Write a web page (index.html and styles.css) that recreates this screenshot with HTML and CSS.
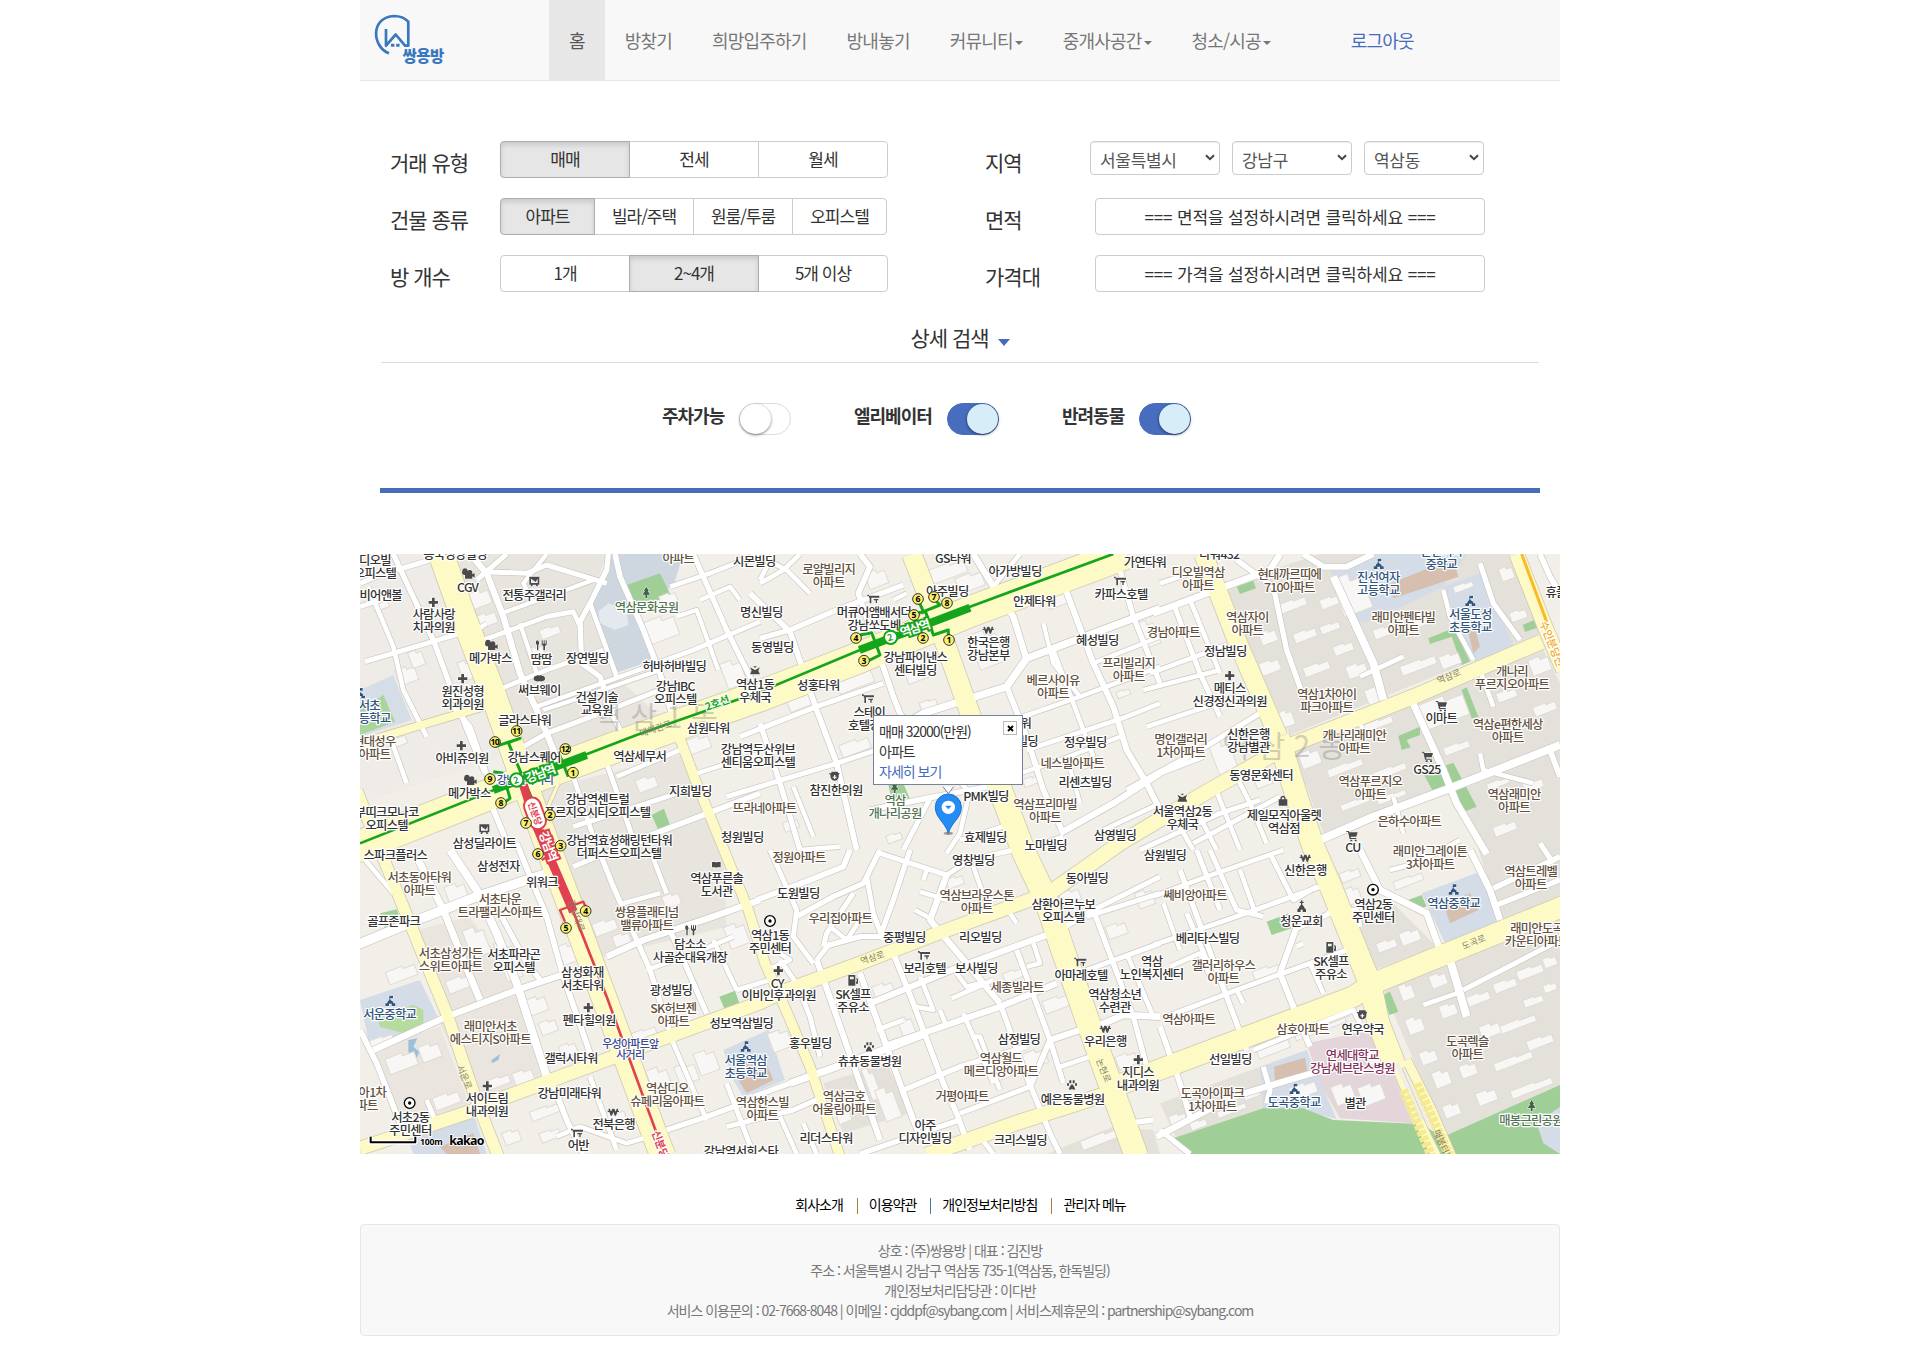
FILE: index.html
```html
<!DOCTYPE html>
<html lang="ko">
<head>
<meta charset="utf-8">
<title>쌍용방</title>
<link rel="stylesheet" href="styles.css">
</head>
<body>
<div class="container">
  <header class="navbar">
    <a class="brand">
      <svg class="logo" viewBox="0 0 72 60" width="72" height="60">
        <path d="M15 44.3C-2 38-4 8 20 7Q29 7 34.3 12.7V36.7H31L21.7 25.5L12 36.7V20" fill="none" stroke="#3878bf" stroke-width="2.7" stroke-linejoin="round"/>
        <path d="M17 36.2h3.4M22.2 36.2h3.4" stroke="#3878bf" stroke-width="3"/>
        <text class="logo-text" x="28.6" y="53.4">쌍용방</text>
      </svg>
    </a>
    <nav class="menu">
      <a class="menu-item active">홈</a>
      <a class="menu-item">방찾기</a>
      <a class="menu-item">희망입주하기</a>
      <a class="menu-item">방내놓기</a>
      <a class="menu-item">커뮤니티<i class="caret"></i></a>
      <a class="menu-item">중개사공간<i class="caret"></i></a>
      <a class="menu-item">청소/시공<i class="caret"></i></a>
    </nav>
    <a class="logout">로그아웃</a>
  </header>

  <section class="filters">
    <div class="col-left">
      <div class="row"><span class="row-label">거래 유형</span>
        <div class="btn-group thirds"><label class="btn on">매매</label><label class="btn">전세</label><label class="btn">월세</label></div></div>
      <div class="row"><span class="row-label">건물 종류</span>
        <div class="btn-group kinds"><label class="btn on">아파트</label><label class="btn">빌라/주택</label><label class="btn">원룸/투룸</label><label class="btn">오피스텔</label></div></div>
      <div class="row"><span class="row-label">방 개수</span>
        <div class="btn-group thirds"><label class="btn">1개</label><label class="btn on">2~4개</label><label class="btn">5개 이상</label></div></div>
    </div>
    <div class="col-right">
      <div class="row"><span class="row-label">지역</span>
        <div class="selects">
          <div class="select wide">서울특별시<svg viewBox="0 0 10 7"><path d="M1 1.2l4 4 4-4"/></svg></div>
          <div class="select">강남구<svg viewBox="0 0 10 7"><path d="M1 1.2l4 4 4-4"/></svg></div>
          <div class="select">역삼동<svg viewBox="0 0 10 7"><path d="M1 1.2l4 4 4-4"/></svg></div>
        </div></div>
      <div class="row"><span class="row-label">면적</span><button class="range">=== 면적을 설정하시려면 클릭하세요 ===</button></div>
      <div class="row"><span class="row-label">가격대</span><button class="range">=== 가격을 설정하시려면 클릭하세요 ===</button></div>
    </div>
  </section>

  <div class="detail-head">상세 검색<i class="tri"></i></div>
  <div class="toggles">
    <span class="toggle-name first">주차가능</span><span class="switch"></span>
    <span class="toggle-name second">엘리베이터</span><span class="switch checked"></span>
    <span class="toggle-name third">반려동물</span><span class="switch checked"></span>
  </div>

  <div class="map">
    <svg id="map" viewBox="0 12 3600 1800" width="1200" height="600"></svg>
    <div class="info">
      <div>매매 32000(만원)</div>
      <div>아파트</div>
      <a>자세히 보기</a>
      <span class="info-close"><svg viewBox="0 0 7 7" width="7" height="7"><path d="M1 1l5 5M6 1l-5 5"/></svg></span>
    </div>
  </div>

  <div class="foot-links"><a>회사소개</a><i></i><a>이용약관</a><i></i><a>개인정보처리방침</a><i></i><a>관리자 메뉴</a></div>
  <footer class="foot">
    <p>상호 : (주)쌍용방 | 대표 : 김진방</p>
    <p>주소 : 서울특별시 강남구 역삼동 735-1(역삼동, 한독빌딩)</p>
    <p>개인정보처리담당관 : 이다반</p>
    <p>서비스 이용문의 : 02-7668-8048 | 이메일 : cjddpf@sybang.com | 서비스제휴문의 : partnership@sybang.com</p>
  </footer>
</div>
<script src="map.js"></script>
</body>
</html>
```
FILE: styles.css
```css
* { box-sizing: border-box; }
body {
  margin: 0;
  background: #fff;
  color: #333;
  font: 14px/20px "Noto Sans CJK KR", sans-serif;
  letter-spacing: -1px;
}
.container { width: 1200px; margin: 0 auto; }

.navbar {
  display: flex;
  height: 81px;
  background: #f8f8f8;
  border-bottom: 1px solid #e7e7e7;
  font-size: 18px;
  line-height: 80px;
  letter-spacing: -0.8px;
}
.brand { width: 189px; padding: 9px 0 0 14px; line-height: 0; }
.logo-text { font-size: 15.5px; font-weight: 900; fill: #3878bf; letter-spacing: -0.5px; }
.menu { display: flex; }
.menu-item { padding: 0 20px; color: #777; white-space: nowrap; }
.menu-item.active { background: #e7e7e7; color: #555; }
.caret {
  display: inline-block;
  margin-left: 2px;
  vertical-align: middle;
  border: 4px solid transparent;
  border-top-color: #777;
  border-bottom: 0;
}
.logout { margin-left: 60px; color: #476cbd; }

.filters { display: flex; padding: 60px 0 0 30px; }
.col-left { width: 595px; }
.row { display: flex; height: 57px; }
.row-label { width: 110px; font-size: 21px; line-height: 42px; }
.btn-group { display: flex; height: 37px; }
.btn {
  margin-left: -1px;
  height: 37px;
  border: 1px solid #ccc;
  background: #fff;
  font-size: 17px;
  line-height: 34px;
  text-align: center;
}
.thirds .btn { width: 130px; }
.btn:first-child { margin-left: 0; border-radius: 4px 0 0 4px; }
.btn:last-child { border-radius: 0 4px 4px 0; }
.kinds .btn { width: 100px; }
.kinds .btn:first-child, .kinds .btn:last-child { width: 95px; }
.btn.on {
  z-index: 1;
  background: #e6e6e6;
  border-color: #adadad;
  box-shadow: inset 0 3px 5px rgba(0, 0, 0, .125);
}
.selects { display: flex; gap: 12px; margin-left: -5px; letter-spacing: -0.3px; }
.select {
  display: flex;
  justify-content: space-between;
  align-items: center;
  width: 120px;
  height: 34px;
  padding: 3px 4px 0 9px;
  border: 1px solid #ccc;
  border-radius: 4px;
  box-shadow: inset 0 1px 1px rgba(0, 0, 0, .075);
  color: #555;
  font-size: 17px;
}
.select.wide { width: 130px; }
.select svg { width: 10px; height: 7px; margin-top: -5px; fill: none; stroke: #444; stroke-width: 2; }
.range {
  width: 390px;
  height: 37px;
  padding: 0;
  border: 1px solid #ccc;
  border-radius: 4px;
  background: #fff;
  color: #333;
  font: 17px/34px "Noto Sans CJK KR", sans-serif;
  letter-spacing: -0.15px;
}

.detail-head {
  display: flex;
  justify-content: center;
  height: 51px;
  margin: 0 21px;
  border-bottom: 1px solid #ddd;
  font-size: 21px;
  line-height: 50px;
}
.tri {
  align-self: center;
  margin: 10px 0 0 9px;
  border: 6.5px solid transparent;
  border-top: 7px solid #466bbd;
  border-bottom: 0;
}
.toggles {
  display: flex;
  height: 130px;
  margin: 0 20px;
  padding-top: 40px;
  border-bottom: 5px solid #476cb8;
  font-size: 18px;
  font-weight: 700;
  line-height: 25px;
}
.toggle-name.first { width: 77px; margin-left: 282px; }
.toggle-name.second { width: 93px; margin-left: 63px; }
.toggle-name.third { width: 77px; margin-left: 63px; }
.switch {
  display: flex;
  width: 52px;
  height: 32px;
  border: 1px solid #ddd;
  border-radius: 16px;
}
.switch::before {
  content: "";
  width: 31px;
  height: 30px;
  border-radius: 50%;
  background: #fff;
  box-shadow: 0 1px 3px rgba(0, 0, 0, .5);
}
.switch.checked { justify-content: flex-end; background: #486cbe; border-color: #486cbe; }
.switch.checked::before { background: #d7eef9; }

.map { position: relative; width: 1200px; height: 600px; margin-top: 61px; overflow: hidden; }
.map > svg { display: block; background: #f2efe9; }
.info {
  position: absolute;
  left: 513px;
  top: 161px;
  width: 150px;
  height: 70px;
  padding: 5px;
  border: 1px solid #76819e;
  background: #fff;
  white-space: nowrap;
}
.info a { color: #476cbd; }
.info-close {
  position: absolute;
  top: 5px;
  right: 5px;
  display: grid;
  place-items: center;
  width: 14px;
  height: 14px;
  border: 1px solid #bbb;
  line-height: 0;
}
.info-close path { stroke: #000; stroke-width: 1.8; }

/* map features, drawn in thirds of a pixel */
.lbl { font-size: 37px; font-weight: 500; letter-spacing: -2.2px; text-anchor: middle; fill: #333; stroke: #fff; stroke-width: 7px; stroke-linejoin: round; paint-order: stroke; }
.apt { fill: #625140; }
.park { fill: #527355; }
.school { fill: #31557e; }
.hosp { fill: #81305a; }
.cross { fill: #3b4a91; font-size: 33px; }
.road-name { font-size: 27px; letter-spacing: 0; fill: #85806b; stroke: none; text-anchor: middle; }
.ghost { font-size: 88px; letter-spacing: 26px; fill: #777; opacity: .32; }
.line-name { font-size: 32px; font-weight: 700; fill: #14a51c; stroke: #fff; stroke-width: 6px; paint-order: stroke; text-anchor: middle; letter-spacing: -1px; }
.line-name.red { fill: #e0404f; }
.line-name.amber { fill: #f5a623; font-weight: 500; }
.line-name.small { font-size: 27px; stroke: none; }
.station { font-size: 37px; font-weight: 700; fill: #fff; stroke: #14a51c; stroke-width: 12px; paint-order: stroke; text-anchor: middle; letter-spacing: -4px; }
.station.red { stroke: #e0404f; }
.exit circle { fill: #f9f068; stroke: #333; stroke-width: 3; }
.exit text { font: 700 26px "Noto Sans", sans-serif; fill: #000; text-anchor: middle; letter-spacing: -2px; }
.scale-text { font: 700 26px "Noto Sans", sans-serif; letter-spacing: -0.5px; stroke: #fff; stroke-width: 5px; paint-order: stroke; }
.kakao { font: 700 37px "Noto Sans", sans-serif; letter-spacing: -2px; stroke: #fff; stroke-width: 5px; paint-order: stroke; }
.icon { fill: #4a4a4a; stroke: #fff; stroke-width: 3px; paint-order: stroke; }
.icon.school { fill: #31557e; }
.icon.park { fill: #42634a; }

.foot-links {
  display: flex;
  justify-content: center;
  align-items: center;
  height: 70px;
  padding: 30px 0 0 1px;
  color: #000;
}
.foot-links i { width: 1px; height: 16px; margin: 3px 11px 0 14px; background: #b07b35; }
.foot-links i:nth-of-type(2) { background: #3c80a3; }
.foot {
  height: 112px;
  padding: 15px 0;
  border: 1px solid #e7e7e7;
  border-radius: 4px;
  background: #f8f8f8;
  color: #777;
  text-align: center;
}
.foot p { margin: 0; }
```
FILE: map.js
```js
// The map is split in six sheets of 1200x900 units; a feature's points are local to its sheet.
const SHEETS = { A: [0, 0], B: [1200, 0], C: [2400, 0], D: [0, 900], E: [1200, 900], F: [2400, 900] };
const svg = document.getElementById('map');
let out = '';
const pts = (s, list) => list.trim().split(/\s+/).map(p => {
  const [x, y] = p.split(',').map(Number);
  return (x + SHEETS[s][0]) + ',' + (y + SHEETS[s][1]);
}).join(' ');

// ---- areas ----
const areas = [
  ['A', '#e8e5de', '285,12 740,12 690,160 770,380 900,500 480,640 400,420'],
  ['A', '#e8e5de', '540,720 980,610 1090,900 1100,1130 730,1220 620,950'],
  ['A', '#efece7', '0,12 200,12 430,620 0,760'],
  ['A', '#ced6df', '750,12 970,12 940,110 800,160 850,240 880,330 765,370 690,180'],
  ['A', '#e4e9ef', '715,185 745,160 800,180 805,225 765,240 720,220'],
  ['A', '#9fcf97', '792,108 900,70 932,135 812,185'],
  ['A', '#d5dde6', '0,420 100,375 155,510 0,560'],
  ['A', '#a9d49c', '0,480 70,435 105,515 0,555'],
  ['A', '#9fcf97', '875,795 912,776 930,825 895,840'],
  ['B', '#9fcf97', '385,705 430,700 455,760 400,770'],
  ['C', '#e4e1da', '180,110 480,12 1050,12 1140,250 390,555'],
  ['C', '#e4e1da', '400,600 1150,300 1200,400 1200,580 870,710 490,850'],
  ['C', '#e4e1da', '900,720 1200,600 1200,1060 1020,1110'],
  ['C', '#d3dce7', '510,60 620,12 920,12 850,110 640,210 580,220'],
  ['C', '#d7bfb0', '680,105 880,25 895,80 700,145'],
  ['C', '#d3dce7', '850,110 960,70 1060,285 945,335'],
  ['C', '#d7bfb0', '915,210 935,200 960,290 940,310'],
  ['C', '#9fcf97', '230,110 280,92 288,115 240,132'],
  ['C', '#9fcf97', '805,265 880,235 930,335 905,345 875,260 810,282'],
  ['C', '#9fcf97', '905,420 920,412 955,500 935,505'],
  ['C', '#9fcf97', '715,558 780,530 780,555 740,570 752,592 725,600'],
  ['C', '#9fcf97', '790,670 880,638 950,770 905,788 875,720 820,727'],
  ['C', '#9fcf97', '1088,225 1135,205 1140,230 1095,246'],
  ['D', '#d3dce7', '0,450 180,390 240,515 30,595'],
  ['D', '#b5db9e', '50,500 160,465 190,480 190,520 130,550 60,530'],
  ['D', '#9fcf97', '60,190 110,178 130,230 80,255'],
  ['D', '#eae6df', '170,240 330,200 470,400 420,440 260,490'],
  ['D', '#eae6df', '240,520 480,430 570,680 350,770'],
  ['D', '#eae6df', '30,600 240,530 330,770 110,830'],
  ['D', '#9fcf97', '1078,440 1125,422 1140,465 1095,480'],
  ['D', '#d3dce7', '1090,600 1225,540 1275,690 1150,740 1120,690'],
  ['D', '#d7bfb0', '1110,650 1210,620 1240,690 1160,730'],
  ['D', '#d3dce7', '140,855 340,790 380,912 160,912'],
  ['D', '#d7bfb0', '240,890 340,850 360,912 260,912'],
  ['D', '#9dbfdb', '145,570 172,565 160,590 178,605 165,640 145,605'],
  ['D', '#9dbfdb', '395,630 420,612 415,630 395,640'],
  ['E', '#e4e1da', '190,700 380,640 450,790 250,850'],
  ['E', '#e4e1da', '860,912 1060,830 1180,840 1200,912'],
  ['F', '#e4e1da', '590,200 700,160 830,290 640,360'],
  ['F', '#e4e1da', '670,420 1200,200 1200,730 860,860'],
  ['F', '#e4e1da', '0,760 300,650 400,800 50,870'],
  ['F', '#d3dce7', '785,130 960,65 1025,215 860,290'],
  ['F', '#d7bfb0', '850,160 930,130 955,180 870,220'],
  ['F', '#9fcf97', '730,155 785,135 800,170 770,175'],
  ['F', '#9fcf97', '320,215 385,190 395,235 335,255'],
  ['F', '#9fcf97', '668,435 690,425 715,485 688,495'],
  ['F', '#e3d5d9', '440,580 610,545 660,570 760,820 540,805 480,700'],
  ['F', '#d3dce7', '300,650 440,600 530,808 430,780 310,775'],
  ['F', '#d7bfb0', '342,650 435,623 445,680 345,705'],
  ['F', '#9fcf97', '40,865 310,775 430,775 520,810 780,822 850,860 1200,705 1200,912 85,912'],
  ['F', '#d3dce7', '1130,820 1200,770 1200,912 1150,880'],
];
areas.forEach(([s, c, p]) => out += `<polygon fill="${c}" points="${pts(s, p)}"/>`);

// ---- building blocks: x, y, width, height ----
const blocks = {
  A: '330,120,60,50 340,190,70,40 110,350,60,50 500,290,50,30 540,230,60,30 860,200,90,70 900,130,50,30 30,120,50,60 150,300,40,50 300,330,40,60 980,560,70,45 1090,330,60,80 440,640,40,30 690,720,60,50 830,680,60,40 240,80,30,60 80,560,60,30 560,660,50,40',
  B: '510,40,110,45 590,70,80,50 640,240,80,110 430,310,90,80 230,370,110,45 80,420,80,55 240,570,90,40 320,60,60,50 860,130,60,40 1140,210,50,80 1070,420,40,20 960,620,60,30 790,680,50,25 70,810,45,30 380,850,45,25 480,450,50,25',
  C: '350,150,90,30 480,140,60,30 400,240,70,30 430,340,80,30 560,340,60,40 720,330,110,30 640,230,60,30 750,190,60,40 840,310,60,40 620,410,60,60 600,510,100,25 780,440,140,80 1010,420,60,30 1110,320,60,50 1120,460,70,30 850,580,80,25 420,600,60,50 500,640,110,25 640,650,100,25 540,750,90,20 650,730,90,20 980,690,70,20 1000,820,70,30 300,240,50,40 300,330,60,40 360,480,40,50 160,570,60,100 530,70,90,120 280,650,50,60 1020,50,40,40 1050,180,50,30 1090,690,60,30 880,100,60,20 480,220,60,25 520,280,60,30',
  D: '260,100,60,60 320,230,60,90 80,350,90,40 260,380,80,40 500,440,60,50 540,510,50,40 600,280,50,60 700,210,70,40 760,250,50,35 910,130,50,40 1100,220,60,70 870,650,60,90 950,640,60,60 1010,600,60,70 740,780,60,60 800,540,90,30 420,270,50,120 80,610,90,50 180,580,60,50 380,680,70,30 220,730,80,40 460,660,60,40 510,770,90,30 540,840,60,30 430,840,50,40 600,580,50,40 30,560,70,25',
  E: '30,540,60,60 850,440,80,40 1070,610,60,40 730,360,60,30 220,720,40,100 320,650,30,100 360,710,50,100 560,80,50,30 900,120,60,40 1130,120,50,50 790,600,70,50 340,400,60,40 420,500,40,60 1040,220,60,40 690,650,60,40 960,850,130,30',
  F: '540,60,60,30 650,270,60,30 720,240,60,40 700,80,90,25 560,110,40,50 280,350,80,35 840,460,50,40 740,500,50,50 780,600,50,40 820,660,50,50 900,640,50,40 950,720,60,40 920,430,70,30 1000,390,70,30 1070,350,80,30 1010,510,120,25 1000,620,120,25 1100,560,80,30 1050,700,130,25 1090,440,60,25 1150,320,40,30 720,400,40,50 810,370,50,40 850,760,50,40 960,520,60,40 290,580,100,30 400,520,160,25 450,500,120,20 520,700,60,60 600,700,70,60 620,600,60,40 30,790,50,40 90,810,50,25 170,770,90,20 250,720,50,25 390,700,80,40 1150,400,40,25'
};
out += '<g fill="#f8f7f5" stroke="#dedbd4" stroke-width="3">';
for (const s in blocks) blocks[s].split(' ').forEach(b => {
  const [x, y, w, h] = b.split(',').map(Number), X = x + SHEETS[s][0], Y = y + SHEETS[s][1];
  out += `<path transform="rotate(-21 ${X + w / 2} ${Y + h / 2})" d="M${X} ${Y}h${w * .6}v${h * .2}h${w * .4}v${h * .8}h${-w}z"/>`;
});
out += '</g>';

// ---- side streets: sheet, width, points ----
const streets = [
  ['A', 13, '0,100 60,75 210,30'], ['A', 12, '25,110 100,290 130,420 200,560'], ['A', 13, '15,335 200,280 300,250'],
  ['A', 14, '100,12 150,120 220,270 290,460 330,560 375,670'], ['A', 17, '330,12 380,70 430,200 480,370 530,480 560,550 605,660'],
  ['A', 13, '350,90 440,12'], ['A', 13, '370,65 500,70 560,45 740,100'], ['A', 11, '560,12 490,100 520,160'],
  ['A', 14, '745,12 740,60 690,160 660,215 665,340 720,380 760,500 790,560'], ['A', 12, '370,270 560,200 640,185 665,240'],
  ['A', 11, '425,190 700,90'], ['A', 11, '480,220 540,400'], ['A', 12, '425,415 560,360 730,300'], ['A', 12, '530,470 740,395 1000,300 1200,215'],
  ['A', 12, '690,160 770,380'], ['A', 15, '765,12 780,80 850,240 900,370 935,490'], ['A', 14, '1000,12 1100,240 1180,400'],
  ['A', 12, '930,110 1050,70 1200,10'], ['A', 11, '950,200 1010,180 1075,360'], ['A', 13, '490,590 560,550 720,490 900,420'],
  ['A', 11, '1020,150 1110,110 1140,150'], ['A', 15, '380,730 450,900'], ['A', 13, '740,640 800,810 830,900'],
  ['A', 12, '770,680 960,600'], ['A', 15, '860,860 1200,730'], ['A', 12, '640,680 700,860 720,900'], ['A', 11, '1010,670 1200,610'],
  ['A', 13, '280,470 330,530 390,700'], ['A', 12, '0,170 120,130'], ['A', 12, '0,600 90,560 140,700'], ['A', 11, '350,240 380,220'],
  ['A', 13, '640,830 860,760 980,720'], ['A', 11, '550,480 640,450 900,360'],
  ['B', 12, '0,100 70,60 120,12'], ['B', 12, '0,20 80,60 150,130'], ['B', 15, '300,12 330,50 295,130 400,440 420,490'],
  ['B', 14, '0,265 90,240 230,180 430,105'], ['B', 15, '-30,130 90,245 170,480 230,640 290,900'], ['B', 13, '-60,560 170,470 370,400'],
  ['B', 20, '440,520 490,490 740,410 800,325 1200,175'], ['B', 17, '640,12 700,110 760,200 800,330'], ['B', 15, '740,410 800,560 850,720 910,850'],
  ['B', 16, '910,100 1000,340 1060,470 1100,600 1160,700 1200,780'], ['B', 12, '760,510 960,440 1200,350'], ['B', 12, '800,600 1100,500 1200,460'],
  ['B', 17, '900,850 1060,760 1200,670'], ['B', 13, '-100,740 230,640 350,600'], ['B', 15, '330,780 500,745 740,700'], ['B', 13, '510,745 430,900'],
  ['B', 12, '630,720 600,850 560,910'], ['B', 12, '600,870 760,820'], ['B', 12, '240,890 120,900'], ['B', 11, '850,220 880,340 960,440'],
  ['B', 11, '1000,340 1200,260'], ['B', 12, '880,300 940,460 1000,620'], ['B', 12, '780,12 740,60 700,110'], ['B', 14, '1080,60 1120,200 1200,400'],
  ['B', 14, '0,520 60,700 120,900'], ['B', 11, '100,710 160,860'], ['B', 12, '420,490 640,740'], ['B', 11, '780,670 900,630 1080,560'],
  ['B', 11, '920,620 960,760'], ['B', 12, '40,12 0,90'], ['B', 11, '400,150 440,130'],
  ['C', 18, '-20,190 140,130 330,60 360,12'], ['C', 13, '40,160 120,370 180,500'], ['C', 12, '90,150 180,370'], ['C', 12, '-30,370 200,285'],
  ['C', 12, '-50,420 180,360'], ['C', 12, '-40,530 230,440'], ['C', 14, '-100,720 120,600 300,490'], ['C', 14, '230,30 340,110 380,300 430,440'],
  ['C', 22, '520,80 640,340 670,450'], ['C', 19, '750,440 850,660 890,760 980,912'], ['C', 22, '480,870 640,800 870,715 1200,585'],
  ['C', 12, '600,380 730,320'], ['C', 12, '850,120 870,200 940,330'], ['C', 16, '430,12 490,50 560,50 640,12'], ['C', 12, '160,700 240,900'],
  ['C', 12, '100,760 170,900'], ['C', 12, '30,780 100,900'], ['C', 12, '220,660 270,760 320,880'], ['C', 13, '100,880 360,740'],
  ['C', 13, '-60,900 180,790 300,750'], ['C', 14, '960,40 1000,160 1080,270'], ['C', 13, '0,670 130,620'], ['C', 15, '1170,600 1200,680'],
  ['C', 13, '0,100 120,60'], ['C', 11, '700,740 730,850'], ['C', 11, '590,500 620,560'], ['C', 15, '1140,12 1170,80 1200,130'],
  ['C', 12, '960,610 970,660 1120,700'], ['C', 12, '960,360 1000,470'],
  ['D', 22, '270,0 350,120 410,250 470,400 560,680'], ['D', 26, '-10,285 160,215 350,140 560,70'], ['D', 15, '470,-20 560,200 610,380 690,610'],
  ['D', 19, '170,20 250,180 310,330 360,450'], ['D', 17, '40,600 260,500 470,420 620,370'], ['D', 15, '0,540 50,640 120,820'],
  ['D', 17, '740,320 850,270 1030,210 1200,150'], ['D', 14, '720,10 760,110 830,270 870,360 940,580'], ['D', 14, '920,220 970,330 1040,490'],
  ['D', 12, '790,160 900,130'], ['D', 13, '640,50 760,0 890,-40'], ['D', 14, '920,840 1040,800 1200,740'], ['D', 12, '940,580 1000,720 1040,810'],
  ['D', 12, '860,360 1000,310 1120,260'], ['D', 12, '1060,270 1130,420'], ['D', 15, '570,680 620,810 670,912'], ['D', 13, '690,680 770,900'],
  ['D', 14, '420,190 500,340 550,400'], ['D', 12, '1130,420 1230,390'], ['D', 12, '870,0 920,130'], ['D', 12, '-10,0 100,130'],
  ['D', 12, '200,750 230,820'], ['D', 13, '1100,700 1180,912'], ['D', 12, '590,860 660,830 800,880 900,850'],
  ['E', 15, '-10,150 150,90 250,50 270,0'], ['E', 13, '30,0 110,180 100,260 160,340'], ['E', 14, '360,0 310,100 220,140 110,200'],
  ['E', 14, '450,0 400,150 360,260 300,260 190,290'], ['E', 13, '320,80 340,190 370,270'], ['E', 13, '190,290 200,250 280,130'],
  ['E', 12, '210,230 260,270 300,210'], ['E', 13, '170,330 210,280'], ['E', 13, '360,10 560,75 630,30 760,0'], ['E', 17, '560,75 510,210 620,340 720,460'],
  ['E', 12, '480,125 560,150'], ['E', 12, '465,180 520,210'], ['E', 12, '490,90 500,60'], ['E', 12, '640,50 690,190'], ['E', 12, '750,190 770,220'],
  ['E', 16, '170,330 230,500 300,700 360,870'], ['E', 16, '300,370 380,590 460,810 480,860'], ['E', 15, '400,310 460,460 550,700 590,790 630,900'],
  ['E', 17, '330,460 600,350 860,255'], ['E', 17, '370,590 720,470 890,400'], ['E', 20, '90,700 370,600 500,550'], ['E', 13, '60,330 110,400 150,500 180,620'],
  ['E', 12, '210,460 310,430'], ['E', 14, '720,460 800,680 870,850 900,912'], ['E', 14, '770,300 870,570 910,700'], ['E', 17, '870,570 960,540'],
  ['E', 15, '870,570 810,710'], ['E', 14, '430,720 600,650 800,590'], ['E', 13, '600,790 810,710'], ['E', 12, '610,490 700,700'],
  ['E', 12, '635,560 660,560 720,720'], ['E', 12, '820,280 840,340 800,350'], ['E', 12, '575,445 700,390'], ['E', 12, '590,370 620,410 660,400'],
  ['E', 18, '1010,530 1090,495 1200,500'], ['E', 14, '1000,180 1060,340 1120,500 1160,650'], ['E', 13, '900,240 1000,180 1200,80'],
  ['E', 13, '900,390 1200,280'], ['E', 13, '980,200 1200,130'], ['E', 12, '1100,310 1180,500'], ['E', 12, '900,650 990,620'],
  ['E', 14, '1100,820 1180,810'], ['E', 14, '300,912 480,850 600,810'], ['E', 13, '-100,830 100,780 190,740'], ['E', 12, '60,800 110,912'],
  ['E', 12, '130,820 170,912'], ['E', 12, '480,380 520,480 470,470'], ['E', 12, '540,480 560,530'], ['E', 12, '350,540 430,510'],
  ['E', 12, '20,360 90,330 60,310'], ['E', 14, '-20,740 90,700'], ['E', 13, '660,860 700,912'],
  ['E', 12, '790,0 910,-40'], ['E', 12, '1030,-60 1200,-140'],
  ['F', 12, '-20,140 140,80 370,0'], ['F', 13, '-20,285 200,210 480,110'], ['F', 14, '60,60 170,360 260,600'], ['F', 13, '150,0 230,180 310,200'],
  ['F', 13, '80,190 140,330'], ['F', 13, '20,500 230,420 560,300'], ['F', 16, '410,230 360,370 400,470 450,590'], ['F', 14, '410,235 510,190'],
  ['F', 18, '600,0 660,120 800,190 840,300'], ['F', 22, '870,330 900,430 920,500'], ['F', 13, '910,420 1200,270'], ['F', 18, '930,0 990,120 1020,210'],
  ['F', 15, '1000,115 1200,20'], ['F', 14, '1010,165 1200,90'], ['F', 14, '1140,-20 1180,40'], ['F', 14, '0,680 190,590 240,560'],
  ['F', 17, '-10,860 220,740 420,680 560,640'], ['F', 15, '0,530 60,700 90,800'], ['F', 14, '310,650 330,720 320,760'], ['F', 12, '450,340 490,430'],
  ['F', 13, '280,600 580,480 600,520'], ['F', 12, '30,350 120,310 150,380'], ['F', 13, '110,0 180,180'], ['F', 13, '330,10 400,150 470,110'],
  ['F', 12, '240,60 290,200'], ['F', 14, '0,840 90,912'], ['F', 13, '600,230 590,180 500,190'], ['F', 12, '790,465 890,430'],
  ['F', 11, '10,160 60,300'], ['F', 12, '230,420 250,460'], ['F', 12, '430,280 410,290'], ['F', 12, '690,60 770,40 900,-30'],
];
const roads = [
  [75, '243,12 310,200 395,420 490,690 560,880 635,1080 890,1770 910,1820'],
  [92, '-20,895 460,705 830,568 1200,438 1500,322 1830,185 2300,10'],
  [58, '1655,12 1720,180 1830,490 1920,720'], [70, '1910,690 1993,910 2055,1040 2105,1190 2175,1390 2250,1600 2330,1820'],
  [55, '2530,12 2630,270 2755,560'], [66, '2755,560 2810,740 2860,890 2908,1000 3030,1300 3055,1420 3110,1560'],
  [44, '3545,275 3160,440 2780,590 2550,720 2400,808 2280,880 2060,1035'],
  [40, '2050,1035 1720,1155 1500,1240 1280,1320 1200,1358 870,1480 760,1522 440,1640 345,1680 0,1795'],
  [62, '3620,1065 3040,1300 2980,1340 2400,1558 2250,1615'], [44, '2260,1625 1980,1715 1700,1815'],
  [34, '-10,720 60,900 150,1120 260,1390 345,1640 415,1820'],
  [29, '950,540 1010,700 1100,920 1165,1080 1215,1240 1265,1350 1350,1550 1440,1820'],
  [23, '-10,590 60,562 370,470'], [44, '3470,12 3555,230 3610,360'], [9, '600,690 555,790'],
  [27, '3100,1530 3190,1740 3230,1820'], [27, '3140,1530 3215,1680 3275,1820'],
];
const line = (w, c, p, extra = '') => `<polyline fill="none" stroke="${c}" stroke-width="${w}" stroke-linejoin="round" ${extra} points="${p}"/>`;
streets.forEach(([s, w, p]) => out += line(w + 6, '#c9c7c3', pts(s, p)));
roads.forEach(([w, p]) => out += line(w + 5, '#cecab5', p));
streets.forEach(([s, w, p]) => out += line(w + 2, '#fff', pts(s, p)));
roads.forEach(([w, p]) => out += line(w, '#fefac6', p));
out += line(12, '#f0eee7', '3110,1540 3185,1710') + line(28, '#f7ea8e', '3130,1620 3215,1820', 'stroke-dasharray="14 5"') + line(28, '#f7ea8e', '3170,1600 3270,1820', 'stroke-dasharray="14 5"');
out += line(9, '#fbb829', '3485,12 3560,215');

// ---- district names in the background ----
[['역삼1동', 902, 535], ['역삼2동', 2785, 620]].forEach(([t, x, y]) => out += `<text class="ghost" text-anchor="middle" x="${x}" y="${y}">${t}</text>`);

// ---- labels: text (| breaks the line), x, y of the first line's centre, kind ----
const labels = {
  A: [['동국성당빌딩', 285, 14], ['디오빌|오피스텔', 45, 32], ['비어앤볼', 62, 138], ['CGV', 323, 113], ['전통주갤러리', 523, 137], ['사람사랑|치과의원', 221, 195],
    ['메가박스', 391, 326], ['땀땀', 543, 328], ['장연빌딩', 682, 326], ['역삼문화공원', 860, 172, 'park'], ['아파트', 955, 25, 'apt'], ['시몬빌딩', 1183, 34],
    ['명신빌딩', 1204, 188], ['동영빌딩', 1237, 293], ['허바허바빌딩', 943, 350], ['써브웨이', 538, 423], ['건설기술|교육원', 710, 444], ['강남IBC|오피스텔', 946, 410],
    ['역삼1동|우체국', 1185, 404], ['원진성형|외과의원', 308, 426], ['서초|초등학교', 28, 466, 'school'], ['글라스타워', 494, 513], ['삼원타워', 1045, 536],
    ['현대성우|아파트', 43, 574, 'apt'], ['아비쥬의원', 306, 627], ['강남스퀘어', 522, 622], ['역삼세무서', 839, 621], ['강남역두산위브|센티움오피스텔', 1194, 598],
    ['메가박스', 328, 730], ['강남역센트럴|푸르지오시티오피스텔', 712, 749], ['지희빌딩', 991, 725], ['뜨라네아파트', 1214, 775, 'apt'], ['부띠크모나코|오피스텔', 80, 788],
    ['삼성딜라이트', 373, 880], ['강남역효성해링턴타워|더퍼스트오피스텔', 777, 873], ['청원빌딩', 1147, 862], ['강남역사거리', 495, 688, 'cross']],
  B: [['로얄빌리지|아파트', 206, 59, 'apt'], ['GS타워', 579, 27], ['아가방빌딩', 765, 65], ['가연타워', 1155, 38], ['아주빌딩', 562, 125], ['카파스호텔', 1083, 133],
    ['안제타워', 823, 155], ['머큐어앰배서더|강남쏘도베', 342, 188], ['한국은행|강남본부', 685, 278], ['혜성빌딩', 1012, 272], ['경남아파트', 1240, 247, 'apt'],
    ['강남파이낸스|센터빌딩', 466, 323], ['프리빌리지|아파트', 1106, 340, 'apt'], ['베르사이유|아파트', 879, 392, 'apt'], ['성홍타워', 175, 407], ['스테이|호텔강남', 328, 488],
    ['삼영타워', 750, 520], ['대신빌딩', 770, 575], ['정우빌딩', 976, 577], ['네스빌아파트', 937, 640, 'apt'], ['리센츠빌딩', 975, 698], ['명인갤러리|1차아파트', 1262, 570, 'apt'],
    ['참진한의원', 228, 721], ['역삼|개나리공원', 405, 751, 'park'], ['PMK빌딩', 678, 740], ['역삼프리마빌|아파트', 855, 763, 'apt'], ['효제빌딩', 676, 863],
    ['삼영빌딩', 1065, 858], ['노마빌딩', 857, 887]],
  C: [['타워432', 178, 14], ['디오빌역삼|아파트', 114, 68, 'apt'], ['현대까르띠에|710아파트', 388, 74, 'apt'], ['진선여자|고등학교', 655, 82, 'school'], ['진선여자|중학교', 844, 5, 'school'],
    ['서울도성|초등학교', 931, 195, 'school'], ['휴플러스', 1220, 128], ['역삼자이|아파트', 262, 203, 'apt'], ['래미안펜타빌|아파트', 730, 203, 'apt'], ['정남빌딩', 196, 305],
    ['개나리|푸르지오아파트', 1056, 366, 'apt'], ['메티스|신경정신과의원', 209, 415], ['역삼1차아이|파크아파트', 500, 434, 'apt'], ['이마트', 844, 506],
    ['역삼e편한세상|아파트', 1043, 524, 'apt'], ['신한은행|강남별관', 265, 555], ['개나리래미안|아파트', 583, 557, 'apt'], ['GS25', 801, 660], ['동영문화센터', 303, 678],
    ['역삼푸르지오|아파트', 631, 695, 'apt'], ['역삼래미안|아파트', 1062, 733, 'apt'], ['서울역삼2동|우체국', 67, 785], ['제일모직아울렛|역삼점', 372, 797],
    ['은하수아파트', 748, 814, 'apt'], ['CU', 579, 893]],
  D: [['스파크플러스', 106, 16], ['서초동아타워|아파트', 178, 83, 'apt'], ['삼성전자', 415, 49], ['위워크', 546, 98], ['역삼푸른솔|도서관', 1070, 85],
    ['서초타운|트라팰리스아파트', 420, 150, 'apt'], ['골프존파크', 101, 214], ['쌍용플래티넘|밸류아파트', 860, 187, 'apt'], ['담소소|사골순대육개장', 990, 284],
    ['역삼1동|주민센터', 1230, 256], ['서초삼성가든|스위트아파트', 272, 310, 'apt'], ['서초파라곤|오피스텔', 461, 314], ['삼성화재|서초타워', 667, 368], ['광성빌딩', 933, 422],
    ['이비인후과의원', 1256, 436], ['SK허브젠|아파트', 940, 475, 'apt'], ['서운중학교', 89, 493, 'school'], ['펜타힐의원', 687, 512], ['성보역삼빌딩', 1144, 521],
    ['래미안서초|에스티지S아파트', 391, 529, 'apt'], ['우성아파트앞|사거리', 811, 582, 'cross'], ['갤럭시타워', 633, 627], ['서울역삼|초등학교', 1157, 631, 'school'],
    ['강남미래타워', 628, 731], ['역삼디오|슈페리움아파트', 922, 716, 'apt'], ['역삼한스빌|아파트', 1207, 757, 'apt'], ['신동아1차|아파트', 5, 729, 'apt'],
    ['서이드림|내과의원', 381, 745], ['서초2동|주민센터', 151, 803], ['전북은행', 761, 823], ['어반', 655, 887], ['강남역서희스타', 1143, 905]],
  E: [['정원아파트', 117, 23, 'apt'], ['영창빌딩', 640, 31], ['동아빌딩', 981, 86], ['도원빌딩', 115, 130], ['역삼브라운스톤|아파트', 650, 136, 'apt'], ['삼환아르누보|오피스텔', 910, 164],
    ['우리집아파트', 241, 205, 'apt'], ['중평빌딩', 433, 263], ['리오빌딩', 661, 263], ['보리호텔', 494, 356], ['보사빌딩', 649, 356], ['아마레호텔', 963, 377],
    ['역삼|노인복지센터', 1175, 335], ['CY', 52, 401], ['SK셀프|주유소', 279, 433], ['세종빌라트', 771, 412, 'apt'], ['역삼청소년|수련관', 1064, 434], ['홍우빌딩', 151, 581],
    ['삼정빌딩', 777, 569], ['우리은행', 1036, 575], ['츄츄동물병원', 329, 635], ['역삼월드|메르디앙아파트', 723, 625, 'apt'], ['지디스|내과의원', 1134, 668],
    ['역삼금호|어울림아파트', 252, 740, 'apt'], ['거평아파트', 606, 741, 'apt'], ['예은동물병원', 938, 749], ['아주|디자인빌딩', 495, 826], ['리더스타워', 198, 866], ['크리스빌딩', 781, 871]],
  F: [['삼원빌딩', 15, 17], ['신한은행', 436, 62], ['래미안그레이튼|3차아파트', 810, 5, 'apt'], ['역삼트레벨|아파트', 1112, 65, 'apt'], ['쎄비앙아파트', 105, 136, 'apt'],
    ['역삼2동|주민센터', 640, 164], ['역삼중학교', 881, 161, 'school'], ['청운교회', 424, 215], ['베리타스빌딩', 143, 266], ['래미안도곡|카운티아파트', 1130, 236, 'apt'],
    ['갤러리하우스|아파트', 190, 347, 'apt'], ['SK셀프|주유소', 513, 335], ['역삼아파트', 86, 508, 'apt'], ['삼호아파트', 428, 538, 'apt'], ['연우약국', 608, 538],
    ['도곡렉슬|아파트', 922, 576, 'apt'], ['선일빌딩', 211, 628], ['연세대학교|강남세브란스병원', 577, 616, 'hosp'], ['도곡아이파크|1차아파트', 157, 731, 'apt'],
    ['도곡중학교', 402, 757, 'school'], ['별관', 585, 762], ['매봉근린공원', 1113, 811, 'park']]
};

// ---- transit ----
const green = '#14a51c', red = '#e0404f';
out += line(8, green, '0,880 460,697 830,555 1200,425 1500,300 1830,170 2260,12');
out += line(24, green, '400,720 680,615') + line(24, green, '1498,300 1830,173');
out += line(9, green, '405,590 480,565 445,578 515,745') + line(9, green, '595,605 625,680') + line(9, green, '430,670 400,665') + line(9, green, '440,710 450,745 430,760');
out += line(9, green, '1500,255 1535,248 1560,315 1520,335') + line(9, green, '1675,150 1690,185 1740,165 1725,150') + line(9, green, '1695,180 1720,255 1765,240 1765,260') + line(9, green, '1660,190 1700,185');
out += line(26, red, '490,705 530,830 640,1085') + line(8, red, '640,1085 740,1340 890,1750 910,1812') + line(7, red, '615,1115 600,1080 670,1055 678,1072') + line(7, red, '570,915 545,930');

for (const s in labels) labels[s].forEach(([t, x, y, k]) => t.split('|').forEach((ln, i) =>
  out += `<text class="lbl ${k || ''}" x="${x + SHEETS[s][0]}" y="${y + SHEETS[s][1] + 13 + i * (k === 'cross' ? 33 : 39)}">${ln}</text>`));

[['테헤란로', 890, 545, -19], ['역삼로', 3270, 388, -22], ['역삼로', 1540, 1232, -18], ['도곡로', 3345, 1185, -22], ['서운로', 305, 1585, 68],
  ['강남대로', 640, 1100, 70], ['논현로', 2222, 1565, 68], ['매봉터널', 3240, 1790, 66]].forEach(([t, x, y, r]) =>
  out += `<text class="road-name" transform="translate(${x} ${y}) rotate(${r})">${t}</text>`);
out += `<text class="line-name" transform="translate(1075 470) rotate(-20)">2호선</text>`;
out += `<text class="line-name red" transform="translate(895 1800) rotate(70)">신분당선</text>`;
out += `<text class="line-name amber" transform="translate(3565 285) rotate(68)">수인분당선</text>`;
out += `<text class="station" transform="translate(545 683) rotate(-20)">강남역</text><text class="station" transform="translate(1668 248) rotate(-18)">역삼역</text>`;
out += `<text class="station red" transform="translate(552 892) rotate(70)">강남역</text>`;
out += `<g transform="translate(525 790) rotate(70)"><rect x="-49" y="-25" width="98" height="50" rx="25" fill="#fff" stroke="${red}" stroke-width="6"/><text class="line-name red small" y="10">신분당</text></g>`;
[[470, 690], [1592, 262]].forEach(([x, y]) => out += `<circle cx="${x}" cy="${y}" r="20" fill="#fff" stroke="${green}" stroke-width="6"/><text class="line-name small" transform="translate(${x} ${y + 10}) rotate(-15)">2</text>`);
[[11, 470, 543], [10, 405, 576], [12, 616, 597], [1, 639, 668], [9, 390, 687], [8, 423, 759], [7, 498, 819], [2, 570, 795], [3, 602, 887], [6, 534, 912], [4, 677, 1083], [5, 618, 1134],
  [6, 1674, 147], [7, 1722, 141], [8, 1761, 159], [5, 1662, 195], [4, 1488, 264], [2, 1689, 264], [1, 1767, 270], [3, 1512, 332]].forEach(([n, x, y]) =>
  out += `<g class="exit"><circle cx="${x}" cy="${y}" r="16"/><text x="${x - 1}" y="${y + 9}">${n}</text></g>`);

// ---- point-of-interest icons, 30x30 around the origin ----
const shapes = {
  plus: 'M-4-14H4V-4H14V4H4V14H-4V4H-14V-4H-4Z',
  movie: 'M-18-10a8 8 0 0 1 16 0a8 8 0 0 1 14 2V0L19-4V10L12 6V13H-10V2A8 8 0 0 1-18-10Z',
  gallery: 'M-15-14H15V10H9L12 15H7L4 10H-4L-7 15H-12L-9 10H-15ZM-10-8V5H10V-8L4 2L-3-3Z',
  food: 'M-12-15a7 8 0 0 1 4 14V15H-12V-1A7 8 0 0 1-12-15ZM2-15H5V-5H8V-15H11V-5H14V-15H17V-2L12 2V15H7V2L2-2Z',
  bread: 'M-17 2Q-18-9-8-9Q-5-13 0-9Q5-13 8-9Q18-9 17 2Q15 9 0 8Q-15 9-17 2Z',
  hotel: 'M-18-13H-13V-10H18V-4H-6V0H15V4H11V12H7V4H1V0H-6V13H-11V-4H-13V-8H-18Z',
  won: 'M-17-5H-13L-15-11H-10L-7-2L-3-11H3L7-2L10-11H15L13-5H17V-1H12L8 10H4L0-1L-4 10H-8L-12-1H-17Z',
  school: 'M-3-16H8V-8H0V-4L9 3V7H15V15H4V8H-4V15H-15V7H-9V3L-3-4Z',
  tree: 'M0-18L8-5H4L12 6H3V16H-3V6H-12L-4-5H-8Z',
  cart: 'M-17-14H-10L-8-10H17L13 3H-4L-3 7H13V10H-7L-12-11H-17ZM-5 12H1V17H-5ZM8 12H14V17H8Z',
  fuel: 'M-15-16H6V16H-15ZM-10-11V-3H1V-11ZM8-8L14-4V10H8V4H10V-2Z',
  paw: 'M-15-5h6v7h-6ZM-8-14h6v9h-6ZM2-14h6v9H2ZM9-5h6v7H9ZM0-3Q9 4 10 13Q5 16 0 12Q-5 16-10 13Q-9 4 0-3Z',
  pot: 'M-10-14H10V-10H15L12-4Q14 12 0 13Q-14 12-13-4L-18-9H-10ZM-2-4V1H-6V4H-2V8H2V4H6V1H2V-4Z',
  post: 'M-15-10L0-2L15-10L10 0L15 11H-15L-10 0ZM-6-13H6L0-8Z',
  bag: 'M-13-5H-8Q-8-16 0-16Q8-16 8-5H13V14H-13ZM-4-5H4Q4-11 0-11Q-4-11-4-5Z',
  church: 'M-2-18H2V-14H6V-10H2V-5L8 2V5L13 9V17H3V10H-3V17H-13V9L-8 5V2L-2-5V-10H-6V-14H-2Z',
  book: 'M-13-8H-2L0-6L2-8H13V8H2L0 10L-2 8H-13Z'
};
const icons = [['movie', 325, 73], ['gallery', 523, 94], ['plus', 220, 157], ['movie', 394, 287], ['food', 543, 286], ['bread', 538, 386], ['plus', 308, 386], ['tree', 859, 128, 'park'],
  ['school', 0, 430, 'school'], ['post', 1185, 362], ['plus', 304, 587], ['movie', 331, 692], ['gallery', 373, 837], ['hotel', 1540, 147], ['hotel', 2280, 93], ['won', 1885, 241],
  ['hotel', 1524, 446], ['pot', 1424, 679], ['tree', 1604, 713, 'park'], ['school', 3056, 42, 'school'], ['school', 3331, 153, 'school'], ['plus', 2609, 377], ['cart', 3244, 467],
  ['cart', 3202, 619], ['post', 2467, 744], ['bag', 2769, 753], ['cart', 2976, 857], ['book', 1069, 944], ['food', 991, 1141], ['school', 91, 1353, 'school'], ['plus', 685, 1373],
  ['plus', 382, 1608], ['won', 760, 1687], ['hotel', 651, 1749], ['school', 1157, 1490, 'school'], ['hotel', 1692, 1216], ['hotel', 2161, 1236], ['fuel', 1480, 1291], ['plus', 1255, 1262],
  ['paw', 1527, 1491], ['won', 2236, 1438], ['plus', 2335, 1529], ['paw', 2136, 1605], ['won', 2836, 925], ['church', 2825, 1069], ['school', 3281, 1019, 'school'], ['fuel', 2914, 1192],
  ['pot', 3007, 1395], ['school', 2804, 1617, 'school'], ['tree', 3515, 1668, 'park']];
icons.forEach(([n, x, y, k]) => out += `<path class="icon ${k || ''}" fill-rule="evenodd" transform="translate(${x} ${y})" d="${shapes[n]}"/>`);
[[149, 1659], [1230, 1113], [3039, 1019]].forEach(([x, y]) => out += `<circle cx="${x}" cy="${y}" r="16" fill="#fff" stroke="#000" stroke-width="4"/><circle cx="${x}" cy="${y}" r="5"/>`);

// ---- scale bar and marker ----
const scaleBar = '32,1760 32,1777 166,1777 166,1760';
out += line(14, '#fff', scaleBar) + line(6, '#000', scaleBar) + '<text class="scale-text" x="180" y="1786">100m</text><text class="kakao" x="268" y="1784">kakao</text>';
out += '<path d="M1749 710L1765 731L1781 710" fill="#fff" stroke="#76819e" stroke-width="3"/>';
out += '<ellipse cx="1765" cy="850" rx="14" ry="5" opacity=".35"/><path d="M1765 850C1755 815 1726 805 1726 771A39 39 0 0 1 1804 771C1804 805 1775 815 1765 850Z" fill="#258cf4" stroke="#1672cf" stroke-width="3"/><circle cx="1765" cy="772" r="20" fill="#fff"/><path d="M1755 767h20l-10 11z" fill="#258cf4"/>';
svg.innerHTML = out;
```
